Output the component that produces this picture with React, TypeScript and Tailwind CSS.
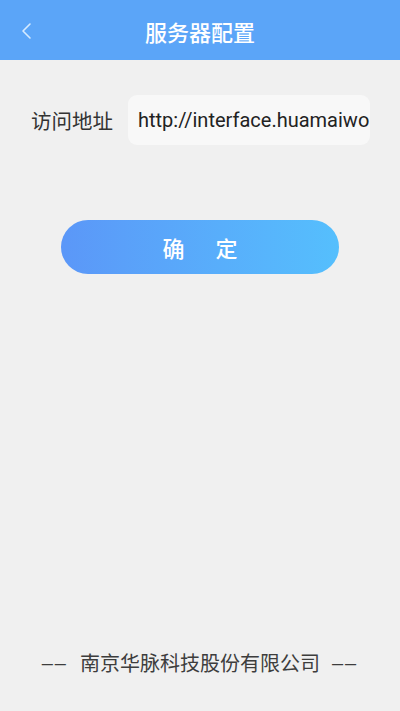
export default function App() {
  const font = { fontFamily: '"Noto Sans CJK SC", "Noto Sans", Roboto, sans-serif' };
  const dash = { fontFamily: '"Liberation Sans", sans-serif' };
  return (
    <div className="w-[400px] h-[711px] bg-[#f0f0f0] flex flex-col overflow-hidden" style={font}>
      <div className="h-[60px] bg-[#5ba5f8] flex items-center relative shrink-0">
        <svg className="absolute left-[19px] top-[22px]" width="14" height="18" viewBox="0 0 14 18">
          <path d="M11 2 L4 9 L11 16" fill="none" stroke="#d6ebff" strokeWidth="1.6" strokeLinecap="round" strokeLinejoin="round" />
        </svg>
        <div className="flex-1 text-center text-white text-[22px] font-medium leading-none pt-[2px]">服务器配置</div>
      </div>
      <div className="flex items-center mt-[35px] pl-[31px] pr-[30px] gap-[15px]">
        <div className="text-[20.5px] text-[#333] whitespace-nowrap leading-none">访问地址</div>
        <div className="flex-1 min-w-0 h-[50px] bg-[#f8f8f8] rounded-[9px] flex items-center pl-[10px] overflow-hidden">
          <span className="text-[20px] text-[#222] whitespace-nowrap leading-none" style={{ fontFamily: 'Roboto, "Noto Sans", sans-serif' }}>http://interface.huamaiwo</span>
        </div>
      </div>
      <div className="mt-[75px] px-[61px]">
        <div className="h-[54px] rounded-full bg-gradient-to-r from-[#5b97f8] to-[#55bffd] flex items-center justify-center text-white text-[22px] font-medium tracking-[31px] pl-[31px]">
          确定
        </div>
      </div>
      <div className="flex-1" />
      <div className="pb-[38px] flex justify-center items-center text-[20px] text-[#3d3d3d] leading-none whitespace-nowrap">
        <span className="tracking-[2px]" style={dash}>––</span>
        <span className="mx-[12px]">南京华脉科技股份有限公司</span>
        <span className="tracking-[2px]" style={dash}>––</span>
      </div>
    </div>
  );
}
